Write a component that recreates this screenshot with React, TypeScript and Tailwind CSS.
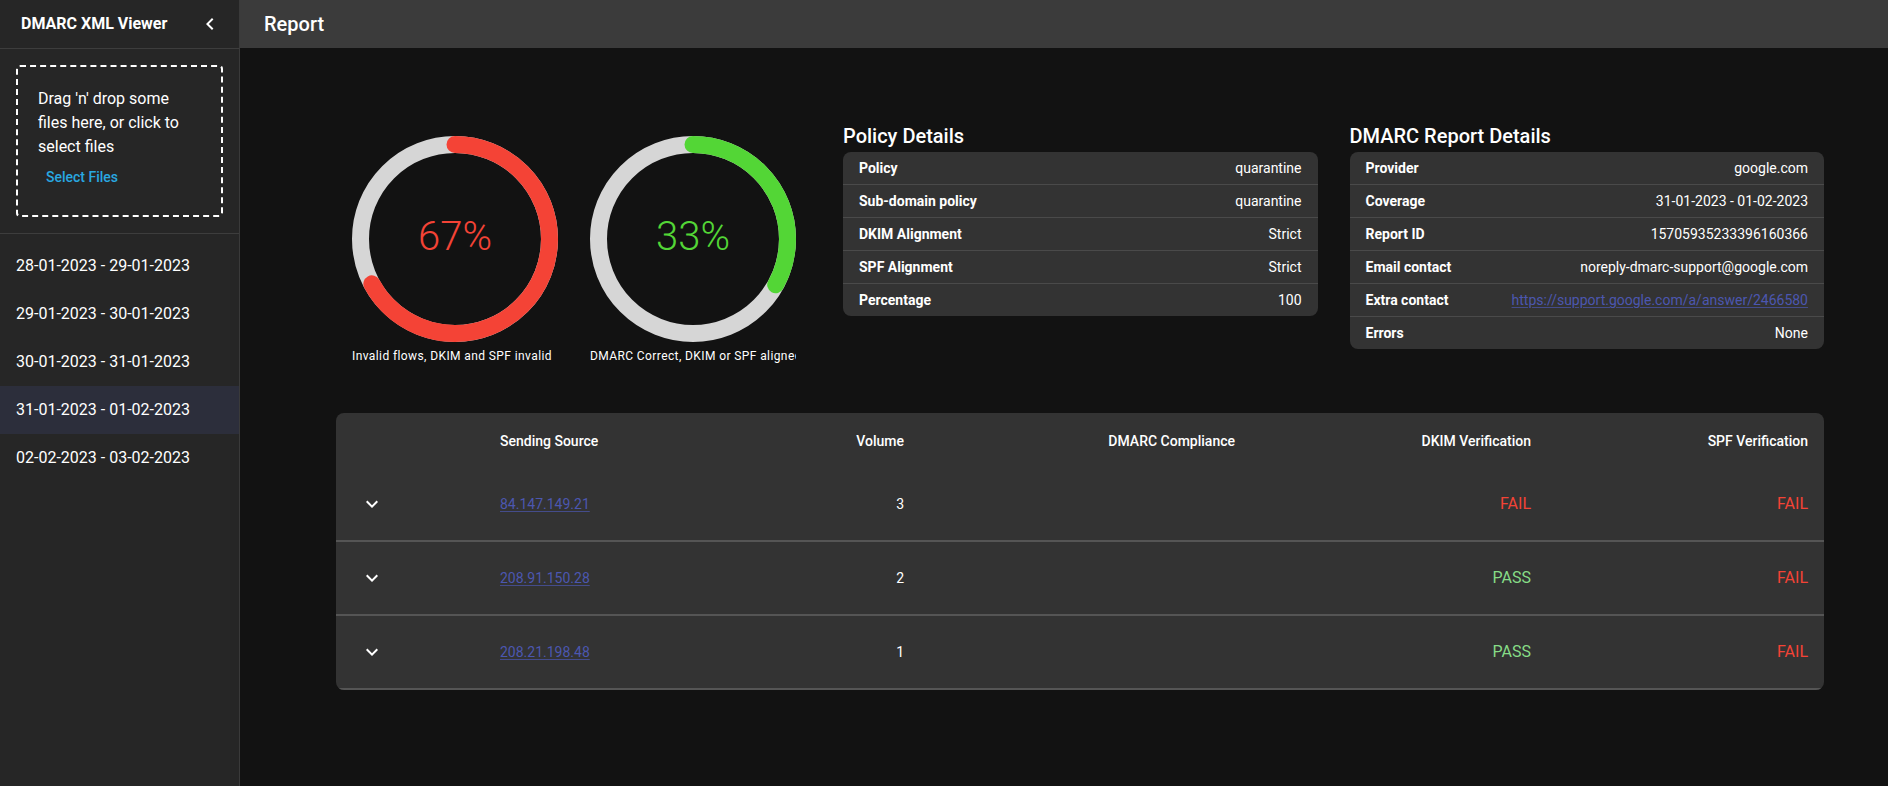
import React from "react";

const dates = [
  "28-01-2023 - 29-01-2023",
  "29-01-2023 - 30-01-2023",
  "30-01-2023 - 31-01-2023",
  "31-01-2023 - 01-02-2023",
  "02-02-2023 - 03-02-2023",
];

const policy = [
  ["Policy", "quarantine"],
  ["Sub-domain policy", "quarantine"],
  ["DKIM Alignment", "Strict"],
  ["SPF Alignment", "Strict"],
  ["Percentage", "100"],
];

const report: [string, string, boolean?][] = [
  ["Provider", "google.com"],
  ["Coverage", "31-01-2023 - 01-02-2023"],
  ["Report ID", "15705935233396160366"],
  ["Email contact", "noreply-dmarc-support@google.com"],
  ["Extra contact", "https://support.google.com/a/answer/2466580", true],
  ["Errors", "None"],
];

const rows = [
  { ip: "84.147.149.21", volume: 3, dkim: false, spf: false },
  { ip: "208.91.150.28", volume: 2, dkim: true, spf: false },
  { ip: "208.21.198.48", volume: 1, dkim: true, spf: false },
];

function Donut({ pct, color, label }: { pct: number; color: string; label: string }) {
  const r = 94.5;
  const c = 2 * Math.PI * r;
  return (
    <div className="w-[206px]">
      <div className="relative w-[206px] h-[206px]">
        <svg width="206" height="206" viewBox="0 0 206 206">
          <circle cx="103" cy="103" r={r} fill="none" stroke="#d6d6d6" strokeWidth="17" />
          <circle
            cx="103"
            cy="103"
            r={r}
            fill="none"
            stroke={color}
            strokeWidth="17"
            strokeLinecap="round"
            strokeDasharray={`${(c * pct) / 100} ${c}`}
            transform="rotate(-90 103 103)"
          />
        </svg>
        <div
          className="absolute inset-0 flex items-center justify-center pb-1 text-[40px] font-light"
          style={{ color }}
        >
          {pct}%
        </div>
      </div>
      <div className="mt-[6px] w-[206px] overflow-hidden whitespace-nowrap text-xs leading-4 tracking-[0.4px] text-white">
        {label}
      </div>
    </div>
  );
}

function DetailCard({ title, items }: { title: string; items: [string, string, boolean?][] }) {
  return (
    <div className="flex-1">
      <h2 className="text-xl font-medium leading-8">{title}</h2>
      <div className="rounded-lg bg-[#333333] overflow-hidden">
        {items.map(([k, v, link]) => (
          <div
            key={k}
            className="h-[33px] last:h-8 flex items-center justify-between px-4 text-sm border-b border-[#4a4a4a] last:border-b-0"
          >
            <span className="font-bold">{k}</span>
            {link ? (
              <a className="text-[#4c57b0] underline underline-offset-2 decoration-[#4c57b0]/70">{v}</a>
            ) : (
              <span>{v}</span>
            )}
          </div>
        ))}
      </div>
    </div>
  );
}

function Verdict({ ok }: { ok: boolean }) {
  return <span className={ok ? "text-[#86dc86]" : "text-[#f44336]"}>{ok ? "PASS" : "FAIL"}</span>;
}

export default function App() {
  return (
    <div className="flex h-screen w-full overflow-hidden bg-[#121212] text-white font-['Roboto',sans-serif]">
      {/* Sidebar */}
      <aside className="w-[240px] shrink-0 flex flex-col bg-[#262626] border-r border-[#3a3a3a]">
        <div className="h-[49px] flex items-center justify-between pl-[21px] pr-[17px] border-b border-[#3d3d3d]">
          <span className="text-base font-bold">DMARC XML Viewer</span>
          <svg width="24" height="24" viewBox="0 0 24 24" fill="white">
            <path d="M15.41 7.41 14 6l-6 6 6 6 1.41-1.41L10.83 12z" />
          </svg>
        </div>
        <div className="m-4 rounded border-2 border-dashed border-white px-5 pt-5 pb-5">
          <p className="text-base leading-6">Drag 'n' drop some files here, or click to select files</p>
          <button className="px-2 py-1.5 text-sm font-medium leading-6 text-[#29a8e0]">Select Files</button>
        </div>
        <div className="border-t border-[#3d3d3d] pt-2">
          {dates.map((d, i) => (
            <div key={d} className={`h-12 flex items-center px-4 text-base ${i === 3 ? "bg-[#2c2e3b]" : ""}`}>
              {d}
            </div>
          ))}
        </div>
      </aside>

      {/* Main */}
      <main className="flex-1 flex flex-col min-w-0">
        <header className="h-12 shrink-0 flex items-center px-6 bg-[#3b3b3b] text-xl font-medium">Report</header>
        <div className="pl-[96px] pr-[64px] pt-[72px]">
          <div className="flex items-start">
            <div className="flex gap-8 pl-4 pt-4">
              <Donut pct={67} color="#f44336" label="Invalid flows, DKIM and SPF invalid" />
              <Donut pct={33} color="#53d636" label="DMARC Correct, DKIM or SPF aligned" />
            </div>
            <div className="ml-[47px] flex-1 flex gap-8">
              <DetailCard title="Policy Details" items={policy as [string, string][]} />
              <DetailCard title="DMARC Report Details" items={report} />
            </div>
          </div>

          <div className="mt-[49px] rounded-lg bg-[#333333] overflow-hidden text-sm">
            <div className="grid grid-cols-[148px_216px_220px_331px_296px_1fr] h-[55px] items-center font-medium">
              <div />
              <div className="px-4">Sending Source</div>
              <div className="px-4 text-right">Volume</div>
              <div className="px-4 text-right">DMARC Compliance</div>
              <div className="px-4 text-right">DKIM Verification</div>
              <div className="px-4 text-right">SPF Verification</div>
            </div>
            {rows.map((r) => (
              <div
                key={r.ip}
                className="grid grid-cols-[148px_216px_220px_331px_296px_1fr] h-[74px] items-center border-b-2 border-[#555555]"
              >
                <div className="pl-6">
                  <svg width="24" height="24" viewBox="0 0 24 24" fill="white">
                    <path d="M7.41 8.59 12 13.17l4.59-4.58L18 10l-6 6-6-6 1.41-1.41z" />
                  </svg>
                </div>
                <div className="px-4">
                  <a className="text-[#4c57b0] underline underline-offset-2 decoration-[#4c57b0]/70">{r.ip}</a>
                </div>
                <div className="px-4 text-right">{r.volume}</div>
                <div className="px-4 text-right" />
                <div className="px-4 text-right text-base">
                  <Verdict ok={r.dkim} />
                </div>
                <div className="px-4 text-right text-base">
                  <Verdict ok={r.spf} />
                </div>
              </div>
            ))}
          </div>
        </div>
      </main>
    </div>
  );
}
